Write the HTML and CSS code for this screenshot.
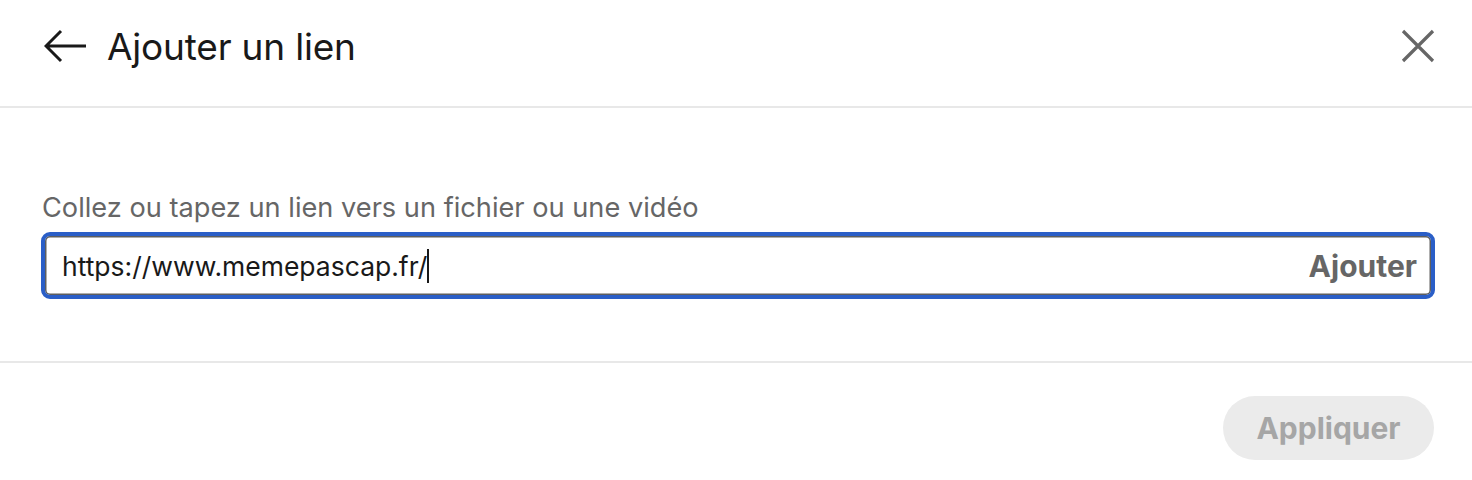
FILE: index.html
```html
<!DOCTYPE html>
<html lang="fr">
<head>
<meta charset="utf-8">
<link rel="stylesheet" href="styles.css">
</head>
<body>
<div class="modal">
  <header class="header">
    <button class="icon-btn back" aria-label="Retour">
      <svg width="44" height="34" viewBox="0 0 44 34"><path d="M42 17H3M17 2L2 17l15 15" fill="none" stroke="#191919" stroke-width="3" stroke-linejoin="miter"/></svg>
    </button>
    <h1 class="title">Ajouter un lien</h1>
    <button class="icon-btn close" aria-label="Fermer">
      <svg width="34" height="34" viewBox="0 0 34 34"><path d="M2 2l30 30M32 2L2 32" fill="none" stroke="#666666" stroke-width="3.2"/></svg>
    </button>
  </header>
  <main class="content">
    <label class="label">Collez ou tapez un lien vers un fichier ou une vidéo</label>
    <div class="field">
      <span class="value">https://www.memepascap.fr/<span class="caret"></span></span>
      <span class="add">Ajouter</span>
    </div>
  </main>
  <footer class="footer">
    <button class="apply">Appliquer</button>
  </footer>
</div>
</body>
</html>
```
FILE: styles.css
```css
html, body { margin: 0; padding: 0; background: #fff; }
body { font-family: Inter, "Noto Sans", "Liberation Sans", sans-serif; color: #191919; }
.modal { width: 1472px; height: 480px; display: flex; flex-direction: column; }
.header { height: 106px; border-bottom: 2px solid #e8e8e8; display: flex; align-items: center; padding: 0 37px 0 44px; box-sizing: content-box; }
.icon-btn { background: none; border: 0; padding: 0; display: flex; align-items: center; justify-content: center; }
.back { width: 44px; height: 34px; margin-top: -14px; }
.title { margin: 0 0 0 19px; font-size: 37px; font-weight: 400; letter-spacing: -0.2px; flex: 1; margin-top: -14px; color: #191919; }
.close { width: 34px; height: 34px; margin-top: -14px; }
.content { height: 255px; border-bottom: 2px solid #e8e8e8; padding: 84px 37px 0 41px; box-sizing: border-box; display: flex; flex-direction: column; }
.label { font-size: 27.2px; color: #666666; margin-left: 1px; line-height: 32px; letter-spacing: 0; }
.field { margin-top: 8px; height: 67px; box-sizing: border-box; border: 4px solid #2a5ec7; border-radius: 9px; box-shadow: inset 0 0 0 1.5px #5e5e5e; display: flex; align-items: center; padding: 0 14px 0 17px; }
.value { flex: 1; font-size: 26.5px; color: #191919; display: flex; align-items: center; }
.caret { display: inline-block; width: 2px; height: 34px; background: #191919; margin-left: 0; }
.add { font-size: 30px; font-weight: 700; color: #666666; }
.footer { flex: 1; display: flex; justify-content: flex-end; align-items: flex-start; padding: 33px 38px 0 0; }
.apply { height: 64px; width: 211px; border: 0; border-radius: 32px; background: #ebebeb; color: #a6a6a6; font-family: inherit; font-size: 30px; font-weight: 700; padding: 0; }
```
